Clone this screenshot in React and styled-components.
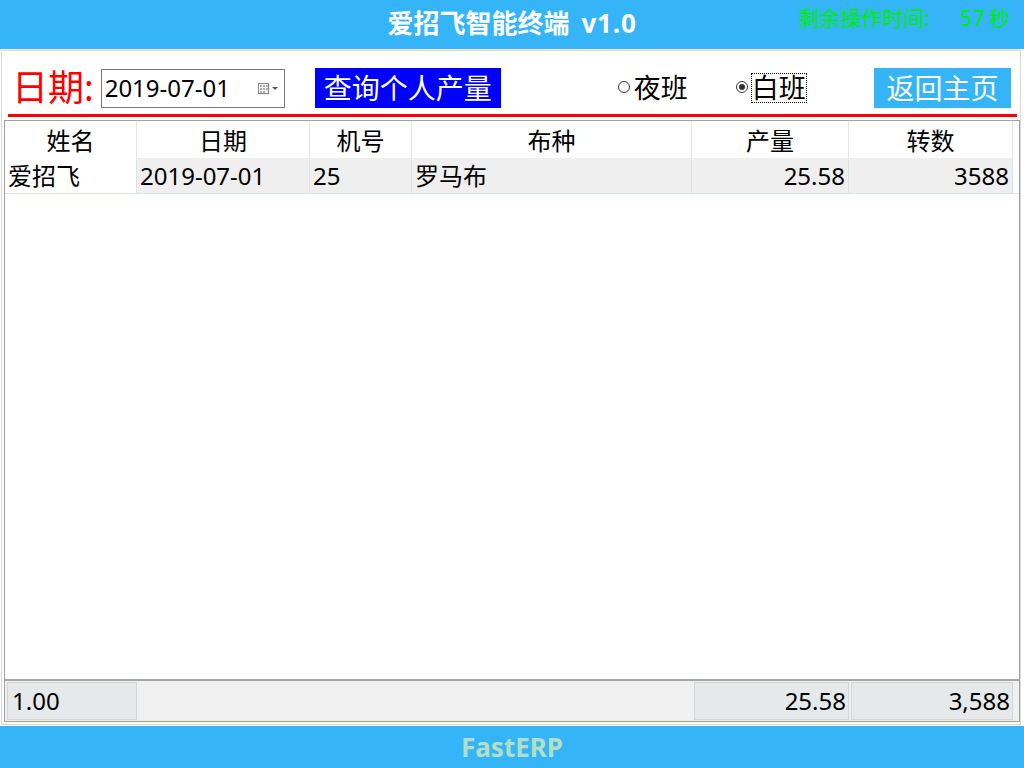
import React from "react";
import styled, { createGlobalStyle } from "styled-components";

const FONT = '"Noto Sans", "Noto Sans CJK SC", sans-serif';
const BLUE = "#35b5f7";
const COLS = "132px 173px 102px 280px 157px 164px";

const Global = createGlobalStyle`
  html, body { margin: 0; padding: 0; background: #fff; }
  body { font-family: ${FONT}; width: 1024px; height: 768px; overflow: hidden; }
  * { box-sizing: border-box; }
`;

const Page = styled.div`
  width: 1024px;
  height: 768px;
  display: flex;
  flex-direction: column;
  background: #fff;
`;

const TopBar = styled.header`
  height: 49px;
  flex: none;
  background: ${BLUE};
  display: grid;
  grid-template-columns: 1fr auto 1fr;
  align-items: center;
`;

const Title = styled.h1`
  grid-column: 2;
  margin: 0;
  color: #fff;
  font-size: 26px;
  font-weight: 700;
  line-height: 30px;
  padding-bottom: 3px;
  white-space: nowrap;
`;

const Version = styled.span`
  margin-left: 12px;
  letter-spacing: 0.8px;
`;

const Timer = styled.div`
  grid-column: 3;
  justify-self: end;
  align-self: start;
  margin-top: 4px;
  padding-right: 14px;
  color: #00ee00;
  font-size: 21px;
  line-height: 28px;
  white-space: nowrap;
`;

const TimerNum = styled.span`
  margin-left: 30px;
  margin-right: 3px;
  letter-spacing: 1px;
`;

const Panel = styled.main`
  margin: 1px 3px 1px 1px;
  height: 675px;
  flex: none;
  border: 1px solid #d8d8d8;
  display: flex;
  flex-direction: column;
`;

const Toolbar = styled.div`
  margin: 0 3px 0 6px;
  padding: 17px 6px 6px 4px;
  border-bottom: 3px solid #ff0000;
  display: flex;
  align-items: center;
  height: 66px;
  flex: none;
`;

const DateLabel = styled.span`
  color: #ff0000;
  font-size: 36px;
  line-height: 40px;
  white-space: nowrap;
`;

const DateBox = styled.div`
  margin-left: 7px;
  width: 184px;
  height: 39px;
  border: 1px solid #7a7a7a;
  display: flex;
  align-items: center;
  padding-left: 3px;
  padding-right: 5px;
  font-size: 24px;
  color: #000;
`;

const DateText = styled.span`
  flex: 1;
  line-height: 30px;
`;

const ActionButton = styled.button`
  height: 40px;
  border: none;
  padding: 0;
  margin-left: ${(p) => p.$ml}px;
  width: ${(p) => p.$w}px;
  background: ${(p) => p.$bg};
  color: #fff;
  font-family: ${FONT};
  font-size: 28px;
  line-height: 40px;
  white-space: nowrap;
  cursor: pointer;
`;

const RadioItem = styled.label`
  display: flex;
  align-items: center;
  margin-left: ${(p) => p.$ml}px;
  font-size: 27px;
  color: #000;
  white-space: nowrap;
`;

const RadioCircle = styled.span`
  width: 12px;
  height: 12px;
  border-radius: 50%;
  border: 1px solid #3a3a3a;
  background: #fff;
  margin-right: 4px;
  margin-top: -2px;
  display: flex;
  align-items: center;
  justify-content: center;
  &::after {
    content: "";
    width: 6px;
    height: 6px;
    border-radius: 50%;
    background: ${(p) => (p.$checked ? "#333" : "transparent")};
  }
`;

const RadioText = styled.span`
  line-height: 28px;
  outline: ${(p) => (p.$focus ? "1px dotted #000" : "none")};
  outline-offset: 0;
`;

const Spacer = styled.div`
  flex: 1;
`;

const Grid = styled.section`
  margin: 3px 0 2px 2px;
  flex: 1;
  border: 1px solid #a0a0a0;
  display: flex;
  flex-direction: column;
`;

const Row = styled.div`
  display: grid;
  grid-template-columns: ${COLS};
  height: ${(p) => p.$h}px;
  flex: none;
  border-bottom: ${(p) => (p.$line ? "1px solid #dbe4ec" : "none")};
`;

const HeadCell = styled.div`
  border-right: 1px solid #dfe6ec;
  text-align: center;
  font-size: 24px;
  line-height: 36px;
  padding-top: 2px;
  color: #000;
`;

const Cell = styled.div`
  border-right: 1px solid #dbe4ec;
  background: ${(p) => (p.$white ? "#fff" : "#efefef")};
  text-align: ${(p) => (p.$right ? "right" : "left")};
  padding: 0 3px;
  font-size: 24px;
  line-height: 35px;
  color: #000;
  white-space: nowrap;
`;

const GridFill = styled.div`
  flex: 1;
`;

const SumRow = styled.div`
  display: grid;
  grid-template-columns: ${COLS};
  border-top: 2px solid #a6a6a6;
  background: #f0f0f0;
  padding: 1px 0;
  height: 42px;
  flex: none;
`;

const SumCell = styled.div`
  grid-column: ${(p) => p.$col};
  margin-left: ${(p) => p.$ml}px;
  background: #e6e9ea;
  border: 1px solid #d4d6d6;
  font-size: 24px;
  line-height: 36px;
  text-align: ${(p) => (p.$right ? "right" : "left")};
  padding: 0 2px 0 4px;
  color: #000;
`;

const Footer = styled.footer`
  flex: none;
  height: 42px;
  background: ${BLUE};
  display: flex;
  align-items: center;
  justify-content: center;
  color: #b2dec6;
  font-size: 26px;
  font-weight: 700;
`;

function CalendarIcon() {
  return (
    <svg width="22" height="14" viewBox="0 0 22 14">
      <rect x="2.5" y="3.5" width="10" height="10" fill="#8a8a8a" opacity="0.35" />
      <rect x="1.5" y="2.5" width="10" height="10" fill="#f4f4f4" stroke="#8a8a8a" />
      <g fill="#b0b0b0">
        <rect x="3" y="4" width="2" height="2" />
        <rect x="6" y="4" width="2" height="2" />
        <rect x="9" y="4" width="2" height="2" />
        <rect x="3" y="7" width="2" height="2" />
        <rect x="6" y="7" width="2" height="2" />
        <rect x="9" y="7" width="2" height="2" />
        <rect x="3" y="10" width="2" height="2" />
        <rect x="6" y="10" width="2" height="2" />
      </g>
      <path d="M15 6 L21 6 L18 9 Z" fill="#4a5a70" />
    </svg>
  );
}

const columns = ["姓名", "日期", "机号", "布种", "产量", "转数"];

export default function App() {
  return (
    <Page>
      <Global />
      <TopBar>
        <Title>
          爱招飞智能终端<Version>v1.0</Version>
        </Title>
        <Timer>
          剩余操作时间:<TimerNum>57</TimerNum>秒
        </Timer>
      </TopBar>
      <Panel>
        <Toolbar>
          <DateLabel>日期:</DateLabel>
          <DateBox>
            <DateText>2019-07-01</DateText>
            <CalendarIcon />
          </DateBox>
          <ActionButton $ml={30} $w={186} $bg="#0000ff">查询个人产量</ActionButton>
          <RadioItem $ml={117}>
            <RadioCircle />
            <RadioText>夜班</RadioText>
          </RadioItem>
          <RadioItem $ml={48}>
            <RadioCircle $checked />
            <RadioText $focus>白班</RadioText>
          </RadioItem>
          <Spacer />
          <ActionButton $ml={0} $w={137} $bg={BLUE}>返回主页</ActionButton>
        </Toolbar>
        <Grid>
          <Row $h={37}>
            {columns.map((c) => (
              <HeadCell key={c}>{c}</HeadCell>
            ))}
          </Row>
          <Row $h={36} $line>
            <Cell $white>爱招飞</Cell>
            <Cell>2019-07-01</Cell>
            <Cell>25</Cell>
            <Cell>罗马布</Cell>
            <Cell $right>25.58</Cell>
            <Cell $right>3588</Cell>
          </Row>
          <GridFill />
          <SumRow>
            <SumCell $col={1} $ml={2}>1.00</SumCell>
            <SumCell $col={5} $ml={2} $right>25.58</SumCell>
            <SumCell $col={6} $ml={2} $right>3,588</SumCell>
          </SumRow>
        </Grid>
      </Panel>
      <Footer>FastERP</Footer>
    </Page>
  );
}
